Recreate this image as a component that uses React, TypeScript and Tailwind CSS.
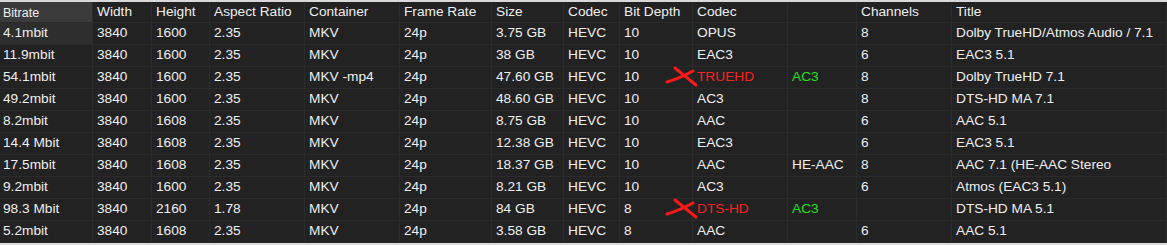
const cols = [
  "Bitrate",
  "Width",
  "Height",
  "Aspect Ratio",
  "Container",
  "Frame Rate",
  "Size",
  "Codec",
  "Bit Depth",
  "Codec",
  "",
  "Channels",
  "Title",
];

type Row = {
  cells: string[];
  struck?: boolean;
};

const rows: Row[] = [
  { cells: ["4.1mbit", "3840", "1600", "2.35", "MKV", "24p", "3.75 GB", "HEVC", "10", "OPUS", "", "8", "Dolby TrueHD/Atmos Audio / 7.1"] },
  { cells: ["11.9mbit", "3840", "1600", "2.35", "MKV", "24p", "38 GB", "HEVC", "10", "EAC3", "", "6", "EAC3 5.1"] },
  { cells: ["54.1mbit", "3840", "1600", "2.35", "MKV -mp4", "24p", "47.60 GB", "HEVC", "10", "TRUEHD", "AC3", "8", "Dolby TrueHD 7.1"], struck: true },
  { cells: ["49.2mbit", "3840", "1600", "2.35", "MKV", "24p", "48.60 GB", "HEVC", "10", "AC3", "", "8", "DTS-HD MA 7.1"] },
  { cells: ["8.2mbit", "3840", "1608", "2.35", "MKV", "24p", "8.75 GB", "HEVC", "10", "AAC", "", "6", "AAC 5.1"] },
  { cells: ["14.4 Mbit", "3840", "1608", "2.35", "MKV", "24p", "12.38 GB", "HEVC", "10", "EAC3", "", "6", "EAC3 5.1"] },
  { cells: ["17.5mbit", "3840", "1608", "2.35", "MKV", "24p", "18.37 GB", "HEVC", "10", "AAC", "HE-AAC", "8", "AAC 7.1 (HE-AAC Stereo"] },
  { cells: ["9.2mbit", "3840", "1600", "2.35", "MKV", "24p", "8.21 GB", "HEVC", "10", "AC3", "", "6", "Atmos (EAC3 5.1)"] },
  { cells: ["98.3 Mbit", "3840", "2160", "1.78", "MKV", "24p", "84 GB", "HEVC", "8", "DTS-HD", "AC3", "", "DTS-HD MA 5.1"], struck: true },
  { cells: ["5.2mbit", "3840", "1608", "2.35", "MKV", "24p", "3.58 GB", "HEVC", "8", "AAC", "", "6", "AAC 5.1"] },
];

// hand-drawn red "x" in front of the struck codec
function RedCross() {
  return (
    <svg
      className="absolute left-[-28px] top-[-2px]"
      width="38"
      height="24"
      viewBox="0 0 38 24"
      fill="none"
    >
      <path
        d="M10 3 C15 7 21 12 31 20"
        stroke="#ff1a1a"
        strokeWidth="3"
        strokeLinecap="round"
      />
      <path
        d="M2 17 C9 15 17 12 28 6"
        stroke="#ff1a1a"
        strokeWidth="3"
        strokeLinecap="round"
      />
    </svg>
  );
}

function Cell({
  text,
  col,
  rowIndex,
  struck,
}: {
  text: string;
  col: number;
  rowIndex: number;
  struck?: boolean;
}) {
  const firstCell = col === 0 && rowIndex === 0;
  let color = "text-[#efefef]";
  if (struck && col === 9) color = "text-[#ff2020]";
  if (struck && col === 10) color = "text-[#20e020]";

  return (
    <div
      className={`relative flex h-[22px] items-center border-b border-r border-[#2b2b2b] whitespace-nowrap ${
        col === 0 ? "pl-[3px]" : "pl-1"
      } ${firstCell ? "bg-[#2e2e2e]" : ""} ${color}`}
    >
      {struck && col === 9 && <RedCross />}
      <span className="relative">{text}</span>
    </div>
  );
}

export default function App() {
  return (
    <div className="h-[245px] w-[1167px] overflow-hidden bg-[#d9d9d9] pt-[2px] font-['Liberation_Sans',Arial,sans-serif] text-[13.7px]">
      <div className="grid grid-cols-[93px_59px_58px_95px_95px_92px_72px_56px_73px_95px_69px_95px_215px] bg-[#222222]">
        {cols.map((c, i) => (
          <div
            key={i}
            className={`flex h-[21px] items-center border-b border-r border-[#2b2b2b] whitespace-nowrap ${
              i === 0
                ? "bg-[#3b3b3b] pl-[3px] pt-[3px] text-[12.5px] text-[#f0f0f0]"
                : "pl-1 text-[#efefef]"
            }`}
          >
            {c}
          </div>
        ))}

        {rows.map((row, r) =>
          row.cells.map((text, c) => (
            <Cell
              key={`${r}-${c}`}
              text={text}
              col={c}
              rowIndex={r}
              struck={row.struck}
            />
          ))
        )}
      </div>
    </div>
  );
}
